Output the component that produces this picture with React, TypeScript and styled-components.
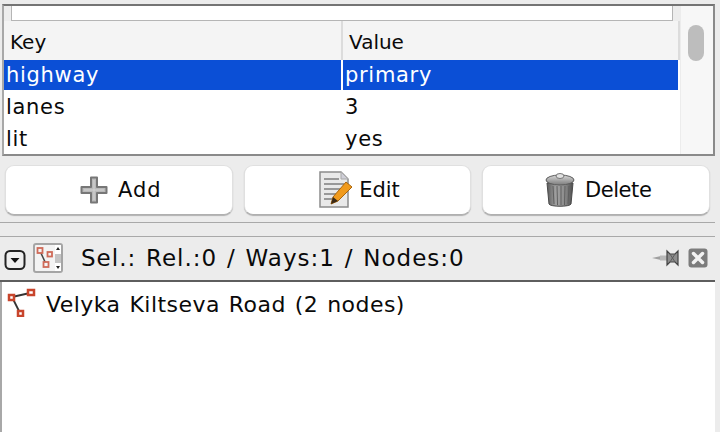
import styled, { createGlobalStyle } from 'styled-components'

const GlobalStyle = createGlobalStyle`
  html, body {
    margin: 0;
    padding: 0;
    background: #ececec;
    overflow: hidden;
  }
`

const Page = styled.div`
  width: 720px;
  height: 432px;
  display: flex;
  flex-direction: column;
  background: #ececec;
  font-family: 'DejaVu Sans', 'Noto Sans', sans-serif;
  font-size: 20px;
  color: #0a0a0a;
  overflow: hidden;
`

const Panel = styled.div`
  margin: 4px 5px 0 2px;
  height: 152px;
  flex: none;
  display: flex;
  border-top: 2px solid #747474;
  border-right: 2px solid #8a8a8a;
  border-bottom: 2px solid #8a8a8a;
  border-left: 2px solid #a8a8a8;
  box-sizing: border-box;
  background: #fff;
`

const TableArea = styled.div`
  flex: 1;
  display: flex;
  flex-direction: column;
  min-width: 0;
`

const FilterStrip = styled.div`
  height: 15px;
  flex: none;
  padding: 0 7px;
  background: #ededed;
`

const FilterInput = styled.div`
  height: 14px;
  background: #fff;
  border-left: 1px solid #b5b5b5;
  border-right: 1px solid #b5b5b5;
  border-bottom: 1px solid #b5b5b5;
`

const TableRow = styled.div<{ $height: number; $color?: string }>`
  height: ${(p) => p.$height}px;
  flex: none;
  display: grid;
  grid-template-columns: 337px 1fr;
  column-gap: 2px;
  margin-right: 2px;
  color: ${(p) => p.$color || 'inherit'};
`

const HeaderCell = styled.div`
  display: flex;
  align-items: center;
  padding: 2px 0 0 6px;
  background: #f4f4f4;
  border-right: 2px solid #dcdcdc;
  margin-right: -2px;
`

const Cell = styled.div<{ $selected?: boolean }>`
  display: flex;
  align-items: center;
  padding-left: 2px;
  font-size: 21px;
  letter-spacing: 0.7px;
  background: ${(p) => (p.$selected ? '#0b4fd6' : 'transparent')};
  white-space: nowrap;
`

const ScrollTrack = styled.div`
  width: 33px;
  flex: none;
  box-sizing: border-box;
  padding: 19px 7px 0 7px;
  background: #f7f7f7;
  border-left: 1px solid #ececec;
`

const ScrollThumb = styled.div`
  width: 16px;
  height: 36px;
  border-radius: 8px;
  background: #bdbdbd;
`

const ButtonRow = styled.div`
  margin: 9px 10px 0 5px;
  display: flex;
  gap: 11px;
  flex: none;
`

const Button = styled.button<{ $gap: number }>`
  appearance: none;
  flex: 1 1 0;
  min-width: 0;
  height: 50px;
  display: flex;
  align-items: center;
  justify-content: center;
  gap: ${(p) => p.$gap}px;
  padding: 0 0 0 4px;
  background: #fff;
  border: 1px solid #e0e0e0;
  border-bottom-color: #b0b0b0;
  border-radius: 9px;
  box-shadow: 0 1px 1px rgba(0, 0, 0, 0.25);
  font: inherit;
  color: inherit;
`

const ButtonLabel = styled.span<{ $tracking: number }>`
  font-size: 21px;
  letter-spacing: ${(p) => p.$tracking}px;
`

const Divider = styled.div`
  margin: 7px 5px 0 0;
  height: 13px;
  flex: none;
  border-top: 1px solid #a9a9a9;
  border-bottom: 1px solid #a9a9a9;
`

const TitleBar = styled.div`
  margin-right: 5px;
  height: 41px;
  padding: 0 7px 2px 4px;
  flex: none;
  display: flex;
  align-items: center;
  gap: 7px;
  background: #ececec;
  border-bottom: 2px solid #5e5e5e;
`

const TitleText = styled.span`
  margin-left: 11px;
  flex: 1;
  font-size: 23px;
  letter-spacing: 1px;
  word-spacing: 1.5px;
  white-space: nowrap;
`

const TitleTools = styled.div`
  display: flex;
  align-items: center;
  gap: 6px;
`

const CollapseSvg = styled.svg`
  margin-top: 5px;
  flex: none;
`

const SelectionList = styled.div`
  flex: 1;
  margin-right: 5px;
  background: #fff;
  border-left: 2px solid #a8a8a8;
  padding: 4px 0 0 4px;
`

const ListRow = styled.div`
  display: flex;
  align-items: center;
  gap: 10px;
  white-space: nowrap;
`

const ListLabel = styled.span`
  padding-top: 6px;
  font-size: 22px;
  letter-spacing: 0.45px;
  word-spacing: 1.5px;
`

function AddIcon() {
  return (
    <svg width="28" height="28" viewBox="0 0 28 28">
      <path
        d="M11 1.500h6V11h9.500v6H17v9.500h-6V17H1.500v-6H11z"
        fill="#b9b9b9"
        stroke="#777"
        strokeWidth="2"
        strokeLinejoin="round"
      />
      <path d="M14 4v20M4 14h20" stroke="#d4d4d4" strokeWidth="1" />
    </svg>
  )
}

function EditIcon() {
  return (
    <svg width="34" height="38" viewBox="0 0 34 38">
      <path d="M1 1h21l7 7v28H1z" fill="#e9e9e9" stroke="#8c8c8c" strokeWidth="1.500" />
      <path d="M22 1v7h7z" fill="#cfcfd8" stroke="#a8a8a8" />
      <path d="M5 8h15M5 13h20M5 18h18M5 23h12M5 28h9" stroke="#7d7d7d" strokeWidth="1.500" />
      <path d="M27 11l6 5-14 14-7 3 2-7z" fill="#f09a1c" stroke="#a8650f" strokeWidth="1" />
      <path d="M14 26l5 4-7 3z" fill="#3a2a18" />
    </svg>
  )
}

function TrashIcon() {
  return (
    <svg width="30" height="36" viewBox="0 0 30 36">
      <defs>
        <linearGradient id="can" x1="0" x2="1" y1="0" y2="0">
          <stop offset="0" stopColor="#5b5b5b" />
          <stop offset="0.35" stopColor="#a2a2a2" />
          <stop offset="0.7" stopColor="#8a8a8a" />
          <stop offset="1" stopColor="#4c4c4c" />
        </linearGradient>
        <linearGradient id="lid" x1="0" x2="0" y1="0" y2="1">
          <stop offset="0" stopColor="#d8d8d8" />
          <stop offset="1" stopColor="#7c7c7c" />
        </linearGradient>
      </defs>
      <path d="M2 11h26l-2 21c-1 3-21 3-22 0z" fill="url(#can)" stroke="#4a4a4a" />
      <path d="M8 14l1 18M12 14l.5 19M16 14v19M20 14l-.5 19M24 14l-1 18" stroke="#5f5f5f" />
      <ellipse cx="15" cy="8" rx="14" ry="5" fill="url(#lid)" stroke="#5c5c5c" />
      <ellipse cx="15" cy="4" rx="4" ry="2.500" fill="#e2e2e2" stroke="#777" />
    </svg>
  )
}

function CollapseIcon() {
  return (
    <CollapseSvg width="22" height="22" viewBox="0 0 22 22">
      <rect x="1.500" y="2" width="19" height="18" rx="4.500" fill="#eee" stroke="#222" strokeWidth="2" />
      <path d="M6.500 9h9L11 14z" fill="#111" />
    </CollapseSvg>
  )
}

function SelectionModeIcon() {
  return (
    <svg width="30" height="30" viewBox="0 0 30 30">
      <rect x="1" y="1" width="28" height="28" rx="2" fill="#f3f3f3" stroke="#a5a5a5" strokeWidth="2" />
      <rect x="22" y="2" width="6" height="26" fill="#fff" />
      <rect x="22" y="11" width="6" height="9" fill="#c4c4c4" />
      <path d="M23 7l2-3 2 3zM23 23l2 3 2-3z" fill="#222" />
      <path d="M7 8l6 13" stroke="#444" strokeWidth="1.500" />
      <rect x="4.500" y="5" width="5" height="5" fill="#f4f4f4" stroke="#cf6a58" strokeWidth="1.800" />
      <rect x="14.500" y="9" width="4.500" height="4.500" fill="#f4f4f4" stroke="#cf6a58" strokeWidth="1.800" />
      <rect x="10.500" y="19" width="5" height="5" fill="#f4f4f4" stroke="#cf6a58" strokeWidth="1.800" />
    </svg>
  )
}

function WayIcon() {
  return (
    <svg width="30" height="30" viewBox="0 0 30 30">
      <path d="M6 10L24 6M6 10l8 16" stroke="#333" strokeWidth="1.800" fill="none" />
      <rect x="3" y="8" width="5" height="5" fill="#fff" stroke="#c8452c" strokeWidth="2.500" />
      <rect x="22" y="3" width="6" height="5" fill="#fff" stroke="#c8452c" strokeWidth="2.500" />
      <rect x="12" y="24" width="5" height="5" fill="#fff" stroke="#c8452c" strokeWidth="2.500" />
    </svg>
  )
}

function PinIcon() {
  return (
    <svg width="30" height="20" viewBox="0 0 30 20">
      <path d="M0 10l9-2v4z" fill="#a0a0a0" />
      <rect x="8" y="7.500" width="8" height="5" fill="#b8b8b8" />
      <path d="M15 3l3 3h5l3-3v14l-3-3h-5l-3 3z" fill="#8d8d8d" stroke="#444" strokeWidth="1.200" />
      <path d="M18 6l5 8M23 6l-5 8" stroke="#5c5c5c" />
    </svg>
  )
}

function CloseIcon() {
  return (
    <svg width="20" height="20" viewBox="0 0 20 20">
      <rect x="0.500" y="0.500" width="19" height="19" rx="3" fill="#7c7c7c" />
      <path d="M5.500 5.500l9 9M14.500 5.500l-9 9" stroke="#f2f2f2" strokeWidth="3.500" strokeLinecap="round" />
    </svg>
  )
}

export default function App() {
  return (
    <Page>
      <GlobalStyle />
      <Panel>
        <TableArea>
          <FilterStrip>
            <FilterInput />
          </FilterStrip>
          <TableRow $height={39}>
            <HeaderCell>Key</HeaderCell>
            <HeaderCell>Value</HeaderCell>
          </TableRow>
          <TableRow $height={30} $color="#fff">
            <Cell $selected>highway</Cell>
            <Cell $selected>primary</Cell>
          </TableRow>
          <TableRow $height={33}>
            <Cell>lanes</Cell>
            <Cell>3</Cell>
          </TableRow>
          <TableRow $height={31}>
            <Cell>lit</Cell>
            <Cell>yes</Cell>
          </TableRow>
        </TableArea>
        <ScrollTrack>
          <ScrollThumb />
        </ScrollTrack>
      </Panel>
      <ButtonRow>
        <Button $gap={10}>
          <AddIcon />
          <ButtonLabel $tracking={1}>Add</ButtonLabel>
        </Button>
        <Button $gap={6}>
          <EditIcon />
          <ButtonLabel $tracking={0}>Edit</ButtonLabel>
        </Button>
        <Button $gap={10}>
          <TrashIcon />
          <ButtonLabel $tracking={-0.4}>Delete</ButtonLabel>
        </Button>
      </ButtonRow>
      <Divider />
      <TitleBar>
        <CollapseIcon />
        <SelectionModeIcon />
        <TitleText>Sel.: Rel.:0 / Ways:1 / Nodes:0</TitleText>
        <TitleTools>
          <PinIcon />
          <CloseIcon />
        </TitleTools>
      </TitleBar>
      <SelectionList>
        <ListRow>
          <WayIcon />
          <ListLabel>Velyka Kiltseva Road (2 nodes)</ListLabel>
        </ListRow>
      </SelectionList>
    </Page>
  )
}
